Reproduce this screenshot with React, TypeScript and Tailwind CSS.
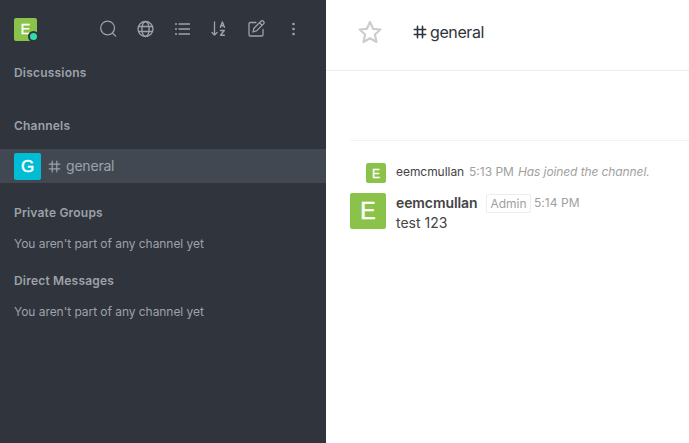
import type { ReactNode } from "react";

function Icon({ children }: { children: ReactNode }) {
  return (
    <svg width="20" height="20" viewBox="0 0 20 20" fill="none" stroke="currentColor" strokeWidth="1.3" strokeLinecap="round" strokeLinejoin="round">
      {children}
    </svg>
  );
}

function Hash({ className, weight }: { className: string; weight: number }) {
  return (
    <svg className={className} viewBox="0 0 14 14" fill="none" stroke="currentColor" strokeWidth={weight} strokeLinecap="round">
      <path d="M4.5 1.300v11.400M9.5 1.300v11.400M1.300 4.5h11.400M1.300 9.5h11.400" />
    </svg>
  );
}

function Toolbar() {
  return (
    <div className="flex gap-[17px] text-[#9ea2a8]">
      <Icon><circle cx="8.6" cy="9" r="6.9" /><path d="m13.5 14 3.1 3.1" /></Icon>
      <Icon>
        <circle cx="9.5" cy="10" r="7.5" />
        <ellipse cx="9.5" cy="10" rx="3.6" ry="7.5" />
        <path d="M2.8 7.5h13.4M2.8 12.5h13.4" />
      </Icon>
      <Icon>
        <path strokeWidth="1.5" strokeLinecap="butt" d="M2 5h2M2 10h2M2 15h2M5.5 5H17M5.5 10H17M5.5 15H17" />
      </Icon>
      <Icon>
        <path d="M4.5 3v13M2 13.5 4.5 16 7 13.5" />
        <path strokeWidth="1.4" d="m10.4 8.3 2-5.3 2 5.3M11.1 6.7h2.6M10.5 11.5h3.8l-3.8 4.8h3.9" />
      </Icon>
      <Icon>
        <path d="M9 3.5H3.2a1.2 1.2 0 0 0-1.2 1.2v11.1A1.2 1.2 0 0 0 3.2 17h11.6a1.2 1.2 0 0 0 1.2-1.2v-5.3M6 13l.9-3.7 7-7a1.75 1.75 0 0 1 2.6 2.6l-7 7L6 13ZM12.5 3.7l2.6 2.6" />
      </Icon>
      <Icon>
        <g fill="currentColor" stroke="none"><circle cx="9.5" cy="5" r="1.35" /><circle cx="9.5" cy="10" r="1.35" /><circle cx="9.5" cy="15" r="1.35" /></g>
      </Icon>
    </div>
  );
}

function Heading({ children }: { children: ReactNode }) {
  return <h3 className="h-4 px-3.5 text-[12px] leading-4 font-semibold tracking-[0.2px]">{children}</h3>;
}

function Empty() {
  return <p className="h-4 px-3.5 text-[12px] leading-4 tracking-[-0.05px]">You aren't part of any channel yet</p>;
}

function Sidebar() {
  return (
    <aside className="flex w-[326px] shrink-0 flex-col bg-[#2f343d] text-[#9ea2a8]">
      <header className="flex h-[65px] items-start pl-3.5">
        <div className="relative mt-[18px] mr-[62px] flex size-[23px] items-center justify-center rounded-[2px] bg-[#8bc34a] font-['Liberation_Sans',sans-serif] text-[15px] text-white [-webkit-text-stroke:0.3px_white]">
          E
          <span className="absolute top-[13px] left-[14px] size-[11px] rounded-full border-2 border-[#2f343d] bg-[#2de0a5]" />
        </div>
        <div className="mt-[19px]"><Toolbar /></div>
      </header>
      <Heading>Discussions</Heading>
      <div className="mt-[37px]"><Heading>Channels</Heading></div>
      <a className="mt-[15px] flex h-[34px] items-center bg-[#414852] pl-3.5">
        <span className="flex size-[27px] items-center justify-center rounded-[2px] bg-[#00bcd4] pt-px font-['Liberation_Sans',sans-serif] text-[17px] text-white [-webkit-text-stroke:0.5px_white]">G</span>
        <Hash className="ml-[7px] size-[13px]" weight={1.3} />
        <span className="ml-[5px] text-[14px] leading-5 tracking-[-0.2px]">general</span>
      </a>
      <div className="mt-[22px]"><Heading>Private Groups</Heading></div>
      <div className="mt-[15px]"><Empty /></div>
      <div className="mt-[21px]"><Heading>Direct Messages</Heading></div>
      <div className="mt-[15px]"><Empty /></div>
    </aside>
  );
}

export default function App() {
  return (
    <div className="flex h-[443px] w-[689px] overflow-hidden bg-white font-['Inter',sans-serif]">
      <Sidebar />
      <main className="min-w-0 flex-1">
        <header className="flex h-[71px] items-start border-b border-[#eceded] pl-8 text-[#2f343d]">
          <svg className="mt-5 size-6 text-[#cbced1]" viewBox="0 0 24 24" fill="none" stroke="currentColor" strokeWidth="2.2" strokeLinejoin="round">
            <path d="m12 2 3.1 6.8 7.3.7-5.5 5 1.6 7.5-6.5-3.8L5.500 22l1.600-7.500-5.500-5 7.300-.7Z" />
          </svg>
          <Hash className="mt-[25px] ml-[31px] size-[14px]" weight={1.6} />
          <h1 className="mt-5 ml-[3px] text-[16px] leading-6 tracking-[-0.4px]">general</h1>
        </header>
        <section className="pt-[69px] pl-6">
          <div className="h-px bg-[#f1f2f3]" />
          <div className="mt-[22px] flex h-5 items-center pl-4 text-[12px] leading-4 whitespace-nowrap">
            <span className="flex size-5 items-center justify-center rounded-[2px] bg-[#8bc34a] pt-px font-['Liberation_Sans',sans-serif] text-[12px] text-white [-webkit-text-stroke:0.3px_white]">E</span>
            <span className="-mt-0.5 ml-2.5 w-[73px] tracking-[-0.05px] text-[#444]">eemcmullan</span>
            <span className="-mt-0.5 w-[49px] text-[#a0a0a0]">5:13 PM</span>
            <em className="-mt-0.5 tracking-[-0.1px] text-[#a0a0a0]">Has joined the channel.</em>
          </div>
          <article className="mt-[10px] flex">
            <span className="flex size-9 items-center justify-center rounded-[2px] bg-[#8bc34a] font-['Liberation_Sans',sans-serif] text-[23px] text-white [-webkit-text-stroke:0.5px_white]">E</span>
            <div className="ml-2.5">
              <div className="flex h-5 items-center whitespace-nowrap">
                <span className="w-[90px] text-[14px] leading-5 font-semibold tracking-[-0.1px] text-[#444]">eemcmullan</span>
                <span className="mt-px flex h-[19px] w-[45px] items-center justify-center rounded-[2px] border border-[#ededed] text-[12px] text-[#a0a0a0]">Admin</span>
                <span className="ml-[3px] text-[12px] tracking-[0.05px] text-[#a0a0a0]">5:14 PM</span>
              </div>
              <p className="text-[14px] leading-5 text-[#444]">test 123</p>
            </div>
          </article>
        </section>
      </main>
    </div>
  );
}
